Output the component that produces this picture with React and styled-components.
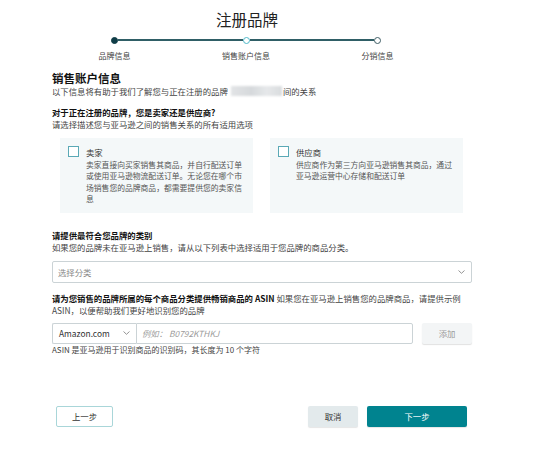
import React from "react";
import styled, { createGlobalStyle } from "styled-components";

const GlobalStyle = createGlobalStyle`
  html, body {
    margin: 0;
    padding: 0;
    background: #ffffff;
  }
  body {
    font-family: "Noto Sans CJK SC", "Noto Sans", sans-serif;
    color: #333;
  }
`;

const Page = styled.div`
  width: 554px;
  height: 456px;
  box-sizing: border-box;
  padding-top: 9px;
  overflow: hidden;
`;

const Header = styled.div`
  width: 494px;
  display: flex;
  flex-direction: column;
  align-items: center;
`;

const Title = styled.h1`
  margin: 0;
  font-size: 15.5px;
  line-height: 20px;
  font-weight: 400;
  color: #222;
`;

const Stepper = styled.div`
  margin-top: 7px;
  margin-left: 81px;
  width: 330px;
  align-self: flex-start;
  display: flex;
  flex-direction: column;
  align-items: center;
`;

const DotRow = styled.div`
  width: 270px;
  height: 8px;
  display: flex;
  align-items: center;
`;

const Dot = styled.span`
  flex: none;
  width: 7px;
  height: 7px;
  border-radius: 50%;
  box-sizing: border-box;
  background: ${(p) => (p.$state === "done" ? "#0f3d47" : "#fff")};
  border: 1.3px solid
    ${(p) =>
      p.$state === "done" ? "#0f3d47" : p.$state === "active" ? "#4fb9c9" : "#3f5e66"};
`;

const Line = styled.span`
  flex: 1;
  height: 1.3px;
  background: #2f5e66;
`;

const LabelRow = styled.div`
  margin-top: 7px;
  width: 330px;
  display: flex;
  justify-content: space-between;
`;

const StepLabel = styled.span`
  width: 67px;
  text-align: center;
  font-size: 8px;
  line-height: 10px;
  color: #444;
`;

const Content = styled.div`
  margin-left: 52px;
  width: 420px;
  display: flex;
  flex-direction: column;
`;

const SectionTitle = styled.h2`
  margin: 11px 0 1px;
  font-size: 11.5px;
  line-height: 12px;
  font-weight: 700;
  color: #111;
`;

const Text = styled.p`
  margin: ${(p) => p.$mt || 0}px 0 0;
  font-size: ${(p) => p.$size || 8.4}px;
  line-height: 12px;
  font-weight: ${(p) => (p.$bold ? 700 : 400)};
  color: ${(p) => (p.$bold ? "#111" : "#444")};
`;

const Strong = styled.strong`
  font-weight: 700;
  color: #111;
`;

const Redacted = styled.span`
  display: inline-block;
  vertical-align: -1px;
  width: 51px;
  height: 10px;
  margin: 0 1px 0 3px;
  background: linear-gradient(90deg, #e2e4e6 0%, #d6d9dc 40%, #e6e8ea 70%, #d9dcde 100%);
  filter: blur(1.2px);
`;

const Cards = styled.div`
  margin: 8px 9px 0 8px;
  display: grid;
  grid-template-columns: 193px 193px;
  column-gap: 17px;
`;

const Card = styled.label`
  display: flex;
  align-items: flex-start;
  gap: 7px;
  padding: 8px 8px 8px 8px;
  min-height: 74px;
  box-sizing: border-box;
  background: #f4f8f9;
`;

const Check = styled.span`
  flex: none;
  width: 11px;
  height: 11px;
  box-sizing: border-box;
  border: 1.4px solid #5aa9b6;
  background: #fff;
`;

const CardBody = styled.div`
  display: flex;
  flex-direction: column;
  margin-top: 1px;
`;

const CardTitle = styled.span`
  font-size: 8.4px;
  line-height: 11.5px;
  color: #333;
`;

const CardText = styled.span`
  font-size: 7.8px;
  line-height: 11.5px;
  color: #555;
`;

const Select = styled.div`
  margin-top: 8px;
  height: 22px;
  box-sizing: border-box;
  border: 1px solid #cbd3d6;
  border-radius: 2px;
  padding: 0 6px 0 5px;
  display: flex;
  align-items: center;
  justify-content: space-between;
  font-size: 8.4px;
  color: #888;
`;

const InputRow = styled.div`
  margin-top: 7px;
  height: 21px;
  display: flex;
  align-items: stretch;
`;

const Market = styled.div`
  width: 84px;
  box-sizing: border-box;
  border: 1px solid #cbd3d6;
  border-right: none;
  border-radius: 2px 0 0 2px;
  padding: 0 6px 0 6px;
  display: flex;
  align-items: center;
  justify-content: space-between;
  font-size: 8.4px;
  color: #333;
`;

const AsinInput = styled.div`
  width: 277px;
  box-sizing: border-box;
  border: 1px solid #cbd3d6;
  border-radius: 0 2px 2px 0;
  padding-left: 5px;
  display: flex;
  align-items: center;
  font-size: 8.4px;
  font-style: italic;
  color: #9a9a9a;
`;

const AddButton = styled.button`
  margin-left: 9px;
  width: 50px;
  border: none;
  border-radius: 2px;
  background: #f3f5f6;
  box-shadow: 0 1px 1px rgba(0, 0, 0, 0.12);
  font-family: inherit;
  font-size: 8.4px;
  color: #9a9a9a;
`;

const Footer = styled.div`
  margin: 50px 5px 0 4px;
  display: flex;
  align-items: center;
  gap: 9px;
`;

const Button = styled.button`
  height: 21px;
  width: ${(p) => p.$w}px;
  box-sizing: border-box;
  border-radius: 2px;
  font-family: inherit;
  font-size: 8.4px;
  padding: 0;
  border: ${(p) => (p.$variant === "outline" ? "1.5px solid #a9d6d9" : "none")};
  background: ${(p) =>
    p.$variant === "primary" ? "#00838f" : p.$variant === "muted" ? "#e3eaec" : "#fff"};
  color: ${(p) => (p.$variant === "primary" ? "#fff" : "#333")};
  box-shadow: ${(p) => (p.$variant === "outline" ? "none" : "0 1px 1px rgba(0,0,0,0.1)")};
  margin-left: ${(p) => (p.$push ? "auto" : "0")};
`;

const Chevron = ({ color = "#888" }) => (
  <svg width="7" height="4" viewBox="0 0 7 4" fill="none">
    <polyline points="0.5,0.5 3.5,3.3 6.5,0.5" stroke={color} strokeWidth="0.9" />
  </svg>
);

export default function App() {
  return (
    <Page>
      <GlobalStyle />
      <Header>
        <Title>注册品牌</Title>
        <Stepper>
          <DotRow>
            <Dot $state="done" />
            <Line />
            <Dot $state="active" />
            <Line />
            <Dot $state="todo" />
          </DotRow>
          <LabelRow>
            <StepLabel>品牌信息</StepLabel>
            <StepLabel>销售账户信息</StepLabel>
            <StepLabel>分销信息</StepLabel>
          </LabelRow>
        </Stepper>
      </Header>

      <Content>
        <SectionTitle>销售账户信息</SectionTitle>
        <Text>
          以下信息将有助于我们了解您与正在注册的品牌
          <Redacted />
          间的关系
        </Text>

        <Text $bold $mt={9}>对于正在注册的品牌，您是卖家还是供应商?</Text>
        <Text>请选择描述您与亚马逊之间的销售关系的所有适用选项</Text>

        <Cards>
          <Card>
            <Check />
            <CardBody>
              <CardTitle>卖家</CardTitle>
              <CardText>
                卖家直接向买家销售其商品，并自行配送订单或使用亚马逊物流配送订单。无论您在哪个市场销售您的品牌商品，都需要提供您的卖家信息
              </CardText>
            </CardBody>
          </Card>
          <Card>
            <Check />
            <CardBody>
              <CardTitle>供应商</CardTitle>
              <CardText>供应商作为第三方向亚马逊销售其商品，通过亚马逊运营中心存储和配送订单</CardText>
            </CardBody>
          </Card>
        </Cards>

        <Text $bold $mt={16}>请提供最符合您品牌的类别</Text>
        <Text>如果您的品牌未在亚马逊上销售，请从以下列表中选择适用于您品牌的商品分类。</Text>
        <Select>
          <span>选择分类</span>
          <Chevron />
        </Select>

        <Text $mt={9}>
          <Strong>请为您销售的品牌所属的每个商品分类提供畅销商品的 ASIN</Strong> 如果您在亚马逊上销售您的品牌商品，请提供示例
          <br />
          ASIN，以便帮助我们更好地识别您的品牌
        </Text>
        <InputRow>
          <Market>
            <span>Amazon.com</span>
            <Chevron />
          </Market>
          <AsinInput>例如： B0792KTHKJ</AsinInput>
          <AddButton>添加</AddButton>
        </InputRow>
        <Text $size={8}>ASIN 是亚马逊用于识别商品的识别码，其长度为 10 个字符</Text>

        <Footer>
          <Button $variant="outline" $w={57}>上一步</Button>
          <Button $variant="muted" $w={50} $push>取消</Button>
          <Button $variant="primary" $w={100}>下一步</Button>
        </Footer>
      </Content>
    </Page>
  );
}
